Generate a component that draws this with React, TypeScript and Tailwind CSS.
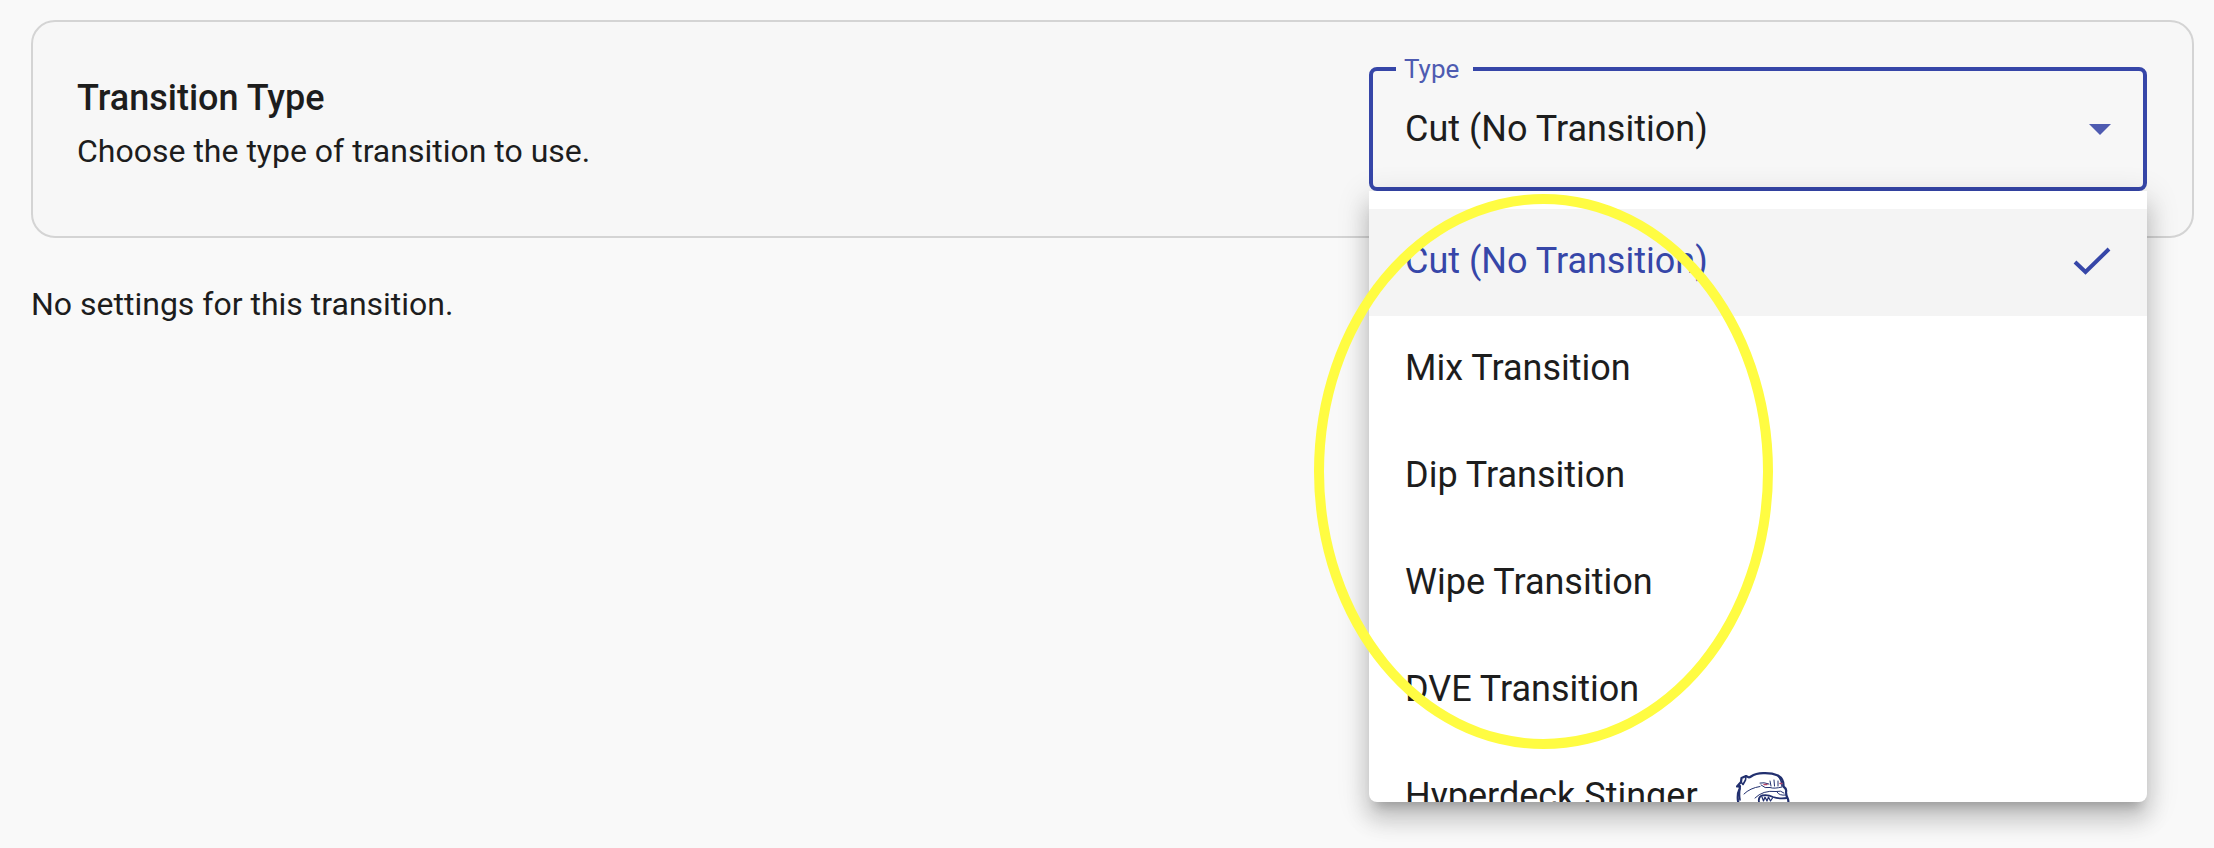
import { useState } from "react";

const TRANSITIONS = [
  "Cut (No Transition)",
  "Mix Transition",
  "Dip Transition",
  "Wipe Transition",
  "DVE Transition",
  "Hyperdeck Stinger",
];

function BulldogLogo() {
  return (
    <svg viewBox="0 0 54 48" className="h-12 w-[54px] shrink-0" fill="none" stroke="#22306f" strokeLinecap="round" strokeLinejoin="round" aria-hidden="true">
      <path
        d="M10 4 5.500 6 5 10 1 14.500 4 14 3.500 17Q1 22 2 29Q4 38 18 44Q34 48 46 41Q54 35 52 27Q50 24 50 20Q51 17 47.500 14.500Q48 7 42 3.500Q36 1 28 1.200Q20 1 15 4.500Q13 6 12 5Z"
        fill="#fff"
        strokeWidth="2.200"
      />
      <path d="M10 4 9.500 8 7 12.500 5 10M4 16Q3 22 4 28M42 4Q46 8 46 14" strokeWidth="1.600" />
      <path d="M8 22Q14 16 24 14.500M24 11Q28 10 33 12M34 9 35 14M38 8 38.500 14M42 9 42 14M25 13Q29 17 34 15.500 38 17 46 15" strokeWidth="1" />
      <path d="M19 26Q27 18 40 19.500Q45 18 48 21M41 20Q43 24 50 23" strokeWidth="1" />
      <path d="M23 30Q22 25 26 23.500Q32 22.500 37 25Q43 27 51 26" strokeWidth="1.800" />
      <path d="m26 25 1.500 4 1.500-4 2 4 1.500-4 2 4 2-3" strokeWidth="1.200" />
      <path d="M28 12.500h3M44 11.500h2" stroke="#b4456a" strokeWidth="1.400" />
    </svg>
  );
}

export default function App() {
  const [selected, setSelected] = useState(TRANSITIONS[0]);

  return (
    <main className="min-h-screen overflow-hidden bg-[#f9f9f9] pt-5 pr-5 pl-[31px] font-['Roboto',sans-serif] text-[#1d1d1d]">
      <section className="flex items-start justify-between rounded-3xl border-2 border-[#d4d4d4] bg-[#f7f7f7] pt-[31px] pr-[45px] pb-[45px] pl-11">
        <div className="pt-[18px]">
          <h1 className="text-[36px] leading-[54px] font-medium">Transition Type</h1>
          <p className="text-[32px] leading-[52px]">Choose the type of transition to use.</p>
        </div>

        <div className="relative w-full max-w-[778px]">
          <fieldset className="relative rounded-lg border-4 border-[#3646a8]">
            <legend className="ml-[23px] pr-[14px] pl-2 text-[26px] leading-8 text-[#4e5bb1]">
              <label htmlFor="transition-type">Type</label>
            </legend>
            <select
              id="transition-type"
              value={selected}
              onChange={(event) => setSelected(event.target.value)}
              className="-mt-[14px] block h-[116px] w-full appearance-none bg-transparent pr-20 pl-8 text-[36px] outline-none"
            >
              {TRANSITIONS.map((name) => (
                <option key={name}>{name}</option>
              ))}
            </select>
            <svg viewBox="0 0 22 11" className="pointer-events-none absolute right-8 bottom-[52px] w-[22px]" aria-hidden="true">
              <path d="M0 0h22L11 11Z" fill="#4e5bb1" />
            </svg>
          </fieldset>

          <div className="absolute top-full left-0 w-full">
            <ul
              role="listbox"
              aria-label="Type"
              className="max-h-[611px] overflow-hidden rounded-b-lg bg-white pt-[18px] text-[36px] shadow-[0_11px_11px_-7px_rgba(0,0,0,0.2),0_18px_22px_2px_rgba(0,0,0,0.14),0_7px_31px_4px_rgba(0,0,0,0.12)]"
            >
              {TRANSITIONS.map((name) => (
                <li key={name} role="option" aria-selected={name === selected}>
                  <button
                    type="button"
                    onClick={() => setSelected(name)}
                    className={
                      name === selected
                        ? "flex h-[107px] w-full items-center justify-between bg-[#f4f4f4] px-9 pb-[3px] text-left text-[#3646a8]"
                        : "flex h-[107px] w-full items-center justify-between px-9 pb-[3px] text-left"
                    }
                  >
                    <span className="flex items-center gap-[38px]">
                      {name}
                      {name === "Hyperdeck Stinger" && <BulldogLogo />}
                    </span>
                    {name === selected && (
                      <svg viewBox="0 0 38 28" className="w-[38px]" fill="none" stroke="currentColor" strokeWidth="4" aria-hidden="true">
                        <path d="M2 15 12.500 25 36 2" />
                      </svg>
                    )}
                  </button>
                </li>
              ))}
            </ul>
            <div className="pointer-events-none absolute top-[3px] -left-[55px] h-[555px] w-[459px] rounded-[50%] border-10 border-[#fffc42]" />
          </div>
        </div>
      </section>

      <p className="mt-10 text-[32px] leading-[52px]">No settings for this transition.</p>
    </main>
  );
}
